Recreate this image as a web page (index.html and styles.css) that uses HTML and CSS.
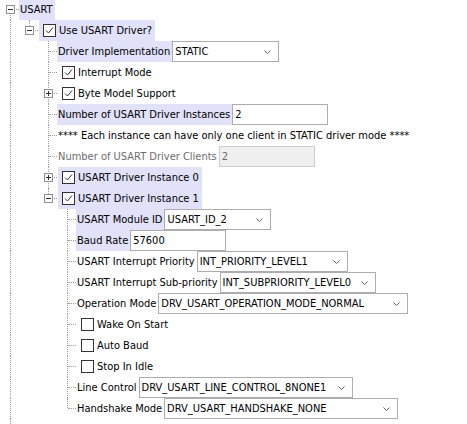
FILE: index.html
```html
<!DOCTYPE html>
<html>
<head>
<meta charset="utf-8">
<link rel="stylesheet" href="styles.css">
</head>
<body>
<div class="tree">
  <div class="row">
    <span class="c d"><i class="bx minus"></i></span>
    <span class="lbl hl">USART</span>
  </div>
  <div class="row">
    <span class="c v"></span>
    <span class="c l"><i class="bx minus"></i></span>
    <span class="cb hl"><svg class="chk" viewBox="0 0 13 13"><rect x="0.5" y="0.5" width="12" height="12"/><path d="M3 6.5l2.5 2.5l4.5-5.5"/></svg><span>Use USART Driver?</span></span>
  </div>
  <div class="row">
    <span class="c v"></span><span class="c"></span><span class="c t"></span>
    <span class="lbl hl">Driver Implementation</span>
    <span class="combo w107"><span class="val">STATIC</span><svg class="chev" viewBox="0 0 7 4"><path d="M0.5 0.5l3 3l3-3"/></svg></span>
  </div>
  <div class="row">
    <span class="c v"></span><span class="c"></span><span class="c t"></span>
    <span class="cb"><svg class="chk" viewBox="0 0 13 13"><rect x="0.5" y="0.5" width="12" height="12"/><path d="M3 6.5l2.5 2.5l4.5-5.5"/></svg><span>Interrupt Mode</span></span>
  </div>
  <div class="row">
    <span class="c v"></span><span class="c"></span><span class="c t"><i class="bx plus"></i></span>
    <span class="cb"><svg class="chk" viewBox="0 0 13 13"><rect x="0.5" y="0.5" width="12" height="12"/><path d="M3 6.5l2.5 2.5l4.5-5.5"/></svg><span>Byte Model Support</span></span>
  </div>
  <div class="row">
    <span class="c v"></span><span class="c"></span><span class="c t"></span>
    <span class="lbl hl">Number of USART Driver Instances</span>
    <span class="field w96">2</span>
  </div>
  <div class="row">
    <span class="c v"></span><span class="c"></span><span class="c t"></span>
    <span class="lbl">**** Each instance can have only one client in STATIC driver mode ****</span>
  </div>
  <div class="row">
    <span class="c v"></span><span class="c"></span><span class="c t"></span>
    <span class="lbl off">Number of USART Driver Clients</span>
    <span class="field w96 disabled">2</span>
  </div>
  <div class="row">
    <span class="c v"></span><span class="c"></span><span class="c t"><i class="bx plus"></i></span>
    <span class="cb hl"><svg class="chk" viewBox="0 0 13 13"><rect x="0.5" y="0.5" width="12" height="12"/><path d="M3 6.5l2.5 2.5l4.5-5.5"/></svg><span>USART Driver Instance 0</span></span>
  </div>
  <div class="row">
    <span class="c v"></span><span class="c"></span><span class="c l"><i class="bx minus"></i></span>
    <span class="cb hl"><svg class="chk" viewBox="0 0 13 13"><rect x="0.5" y="0.5" width="12" height="12"/><path d="M3 6.5l2.5 2.5l4.5-5.5"/></svg><span>USART Driver Instance 1</span></span>
  </div>
  <div class="row">
    <span class="c v"></span><span class="c"></span><span class="c"></span><span class="c t"></span>
    <span class="lbl hl">USART Module ID</span>
    <span class="combo w107"><span class="val">USART_ID_2</span><svg class="chev" viewBox="0 0 7 4"><path d="M0.5 0.5l3 3l3-3"/></svg></span>
  </div>
  <div class="row">
    <span class="c v"></span><span class="c"></span><span class="c"></span><span class="c t"></span>
    <span class="lbl hl">Baud Rate</span>
    <span class="field w96">57600</span>
  </div>
  <div class="row">
    <span class="c v"></span><span class="c"></span><span class="c"></span><span class="c t"></span>
    <span class="lbl">USART Interrupt Priority</span>
    <span class="combo w151"><span class="val">INT_PRIORITY_LEVEL1</span><svg class="chev" viewBox="0 0 7 4"><path d="M0.5 0.5l3 3l3-3"/></svg></span>
  </div>
  <div class="row">
    <span class="c v"></span><span class="c"></span><span class="c"></span><span class="c t"></span>
    <span class="lbl">USART Interrupt Sub-priority</span>
    <span class="combo w156"><span class="val">INT_SUBPRIORITY_LEVEL0</span><svg class="chev" viewBox="0 0 7 4"><path d="M0.5 0.5l3 3l3-3"/></svg></span>
  </div>
  <div class="row">
    <span class="c v"></span><span class="c"></span><span class="c"></span><span class="c t"></span>
    <span class="lbl">Operation Mode</span>
    <span class="combo w250"><span class="val">DRV_USART_OPERATION_MODE_NORMAL</span><svg class="chev" viewBox="0 0 7 4"><path d="M0.5 0.5l3 3l3-3"/></svg></span>
  </div>
  <div class="row">
    <span class="c v"></span><span class="c"></span><span class="c"></span><span class="c t"></span>
    <span class="cb"><svg class="chk" viewBox="0 0 13 13"><rect x="0.5" y="0.5" width="12" height="12"/></svg><span>Wake On Start</span></span>
  </div>
  <div class="row">
    <span class="c v"></span><span class="c"></span><span class="c"></span><span class="c t"></span>
    <span class="cb"><svg class="chk" viewBox="0 0 13 13"><rect x="0.5" y="0.5" width="12" height="12"/></svg><span>Auto Baud</span></span>
  </div>
  <div class="row">
    <span class="c v"></span><span class="c"></span><span class="c"></span><span class="c t"></span>
    <span class="cb"><svg class="chk" viewBox="0 0 13 13"><rect x="0.5" y="0.5" width="12" height="12"/></svg><span>Stop In Idle</span></span>
  </div>
  <div class="row">
    <span class="c v"></span><span class="c"></span><span class="c"></span><span class="c t"></span>
    <span class="lbl">Line Control</span>
    <span class="combo w214"><span class="val">DRV_USART_LINE_CONTROL_8NONE1</span><svg class="chev" viewBox="0 0 7 4"><path d="M0.5 0.5l3 3l3-3"/></svg></span>
  </div>
  <div class="row">
    <span class="c v"></span><span class="c"></span><span class="c"></span><span class="c l"></span>
    <span class="lbl">Handshake Mode</span>
    <span class="combo w234"><span class="val">DRV_USART_HANDSHAKE_NONE</span><svg class="chev" viewBox="0 0 7 4"><path d="M0.5 0.5l3 3l3-3"/></svg></span>
  </div>
  <div class="row">
    <span class="c v"></span>
  </div>
</div>
</body>
</html>
```
FILE: styles.css
```css
html, body {
  margin: 0;
  padding: 0;
  background: #ffffff;
}
body {
  font-family: "DejaVu Sans Condensed", "DejaVu Sans", sans-serif;
  font-stretch: condensed;
  font-size: 11px;
  color: #000000;
  overflow: hidden;
}
.tree {
  display: flex;
  flex-direction: column;
  margin-top: -1px;
}
.row {
  display: flex;
  align-items: stretch;
  height: 21px;
  flex: none;
}
.c {
  position: relative;
  flex: none;
  width: 19px;
}
.c::before,
.c::after {
  content: none;
  position: absolute;
}
.v::before,
.t::before {
  content: "";
  left: 10px;
  top: 0;
  bottom: 0;
  border-left: 1px dotted #a0a0a0;
}
.l::before {
  content: "";
  left: 10px;
  top: 0;
  height: 10px;
  border-left: 1px dotted #a0a0a0;
}
.d::before {
  content: "";
  left: 10px;
  top: 10px;
  bottom: 0;
  border-left: 1px dotted #a0a0a0;
}
.t::after,
.l::after,
.d::after {
  content: "";
  left: 11px;
  right: 0;
  top: 10px;
  border-top: 1px dotted #a0a0a0;
}
.bx {
  position: absolute;
  z-index: 1;
  left: 6px;
  top: 6px;
  width: 9px;
  height: 9px;
  box-sizing: border-box;
  border: 1px solid #919191;
  background: #ffffff;
}
.bx::before {
  content: "";
  position: absolute;
  left: 1px;
  top: 3px;
  width: 5px;
  height: 1px;
  background: #333333;
}
.plus::after {
  content: "";
  position: absolute;
  left: 3px;
  top: 1px;
  width: 1px;
  height: 5px;
  background: #333333;
}
.lbl {
  flex: none;
  line-height: 21px;
  padding: 0 2px 0 1px;
  white-space: nowrap;
}
.hl {
  background: #e1e1fa;
}
.off {
  color: #6d6d6d;
}
.cb {
  flex: none;
  display: flex;
  align-items: center;
  gap: 3px;
  margin-left: 1px;
  padding: 0 3px 0 4px;
  line-height: 21px;
  white-space: nowrap;
}
.chk {
  width: 13px;
  height: 13px;
  flex: none;
}
.chk rect {
  fill: #ffffff;
  stroke: #333333;
  stroke-width: 1;
}
.chk path {
  fill: none;
  stroke: #333333;
  stroke-width: 1;
}
.combo,
.field {
  flex: none;
  box-sizing: border-box;
  height: 21px;
  border: 1px solid #adadad;
  background: #ffffff;
  display: flex;
  align-items: center;
  padding-left: 2px;
  line-height: 19px;
  white-space: nowrap;
  overflow: hidden;
}
.combo .val {
  flex: 1;
}
.chev {
  flex: none;
  width: 7px;
  height: 4px;
  margin-right: 7px;
}
.chev path {
  fill: none;
  stroke: #606060;
  stroke-width: 1;
}
.field.disabled {
  background: #f0f0f0;
  border-color: #cccccc;
  color: #6d6d6d;
}
.w96 { width: 96px; }
.w107 { width: 107px; }
.w151 { width: 151px; }
.w156 { width: 156px; }
.w214 { width: 214px; }
.w234 { width: 234px; }
.w250 { width: 250px; }
```
